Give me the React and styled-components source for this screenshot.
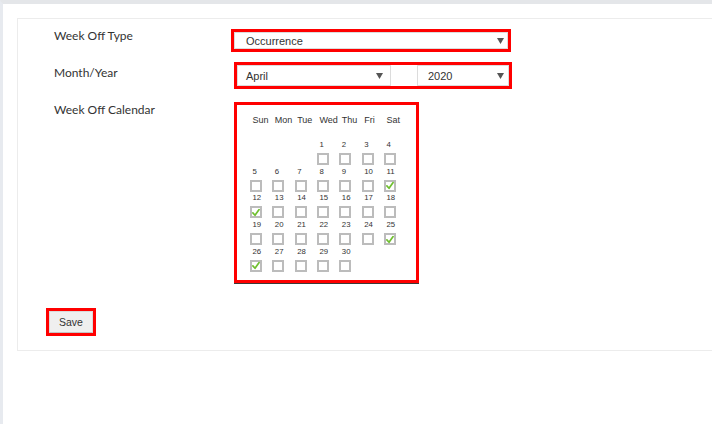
import React from "react";
import styled, { createGlobalStyle } from "styled-components";

const GlobalStyle = createGlobalStyle`
  html, body {
    margin: 0;
    padding: 0;
    background: #ffffff;
    overflow: hidden;
  }
`;

const Page = styled.div`
  box-sizing: border-box;
  height: 424px;
  border-top: 4px solid #e4e6e9;
  border-left: 3px solid #e7eaef;
  background: #fff;
  overflow: hidden;
`;

const Panel = styled.div`
  margin: 14px -40px 0 14px;
  border: 1px solid #ececec;
  padding: 10px 0 14px 36px;
  background: #fff;
`;

const Row = styled.div`
  display: flex;
  align-items: flex-start;
  margin-top: ${({ $gap }) => $gap || 0}px;
`;

const Label = styled.div`
  width: 177px;
  flex: none;
  margin-top: ${({ $offset }) => $offset || 0}px;
  font-family: Lato, "Open Sans", sans-serif;
  font-size: 12px;
  line-height: 14px;
  color: #333;
`;

const Highlight = styled.div`
  box-sizing: border-box;
  display: flex;
  margin-left: ${({ $shift }) => $shift || 0}px;
  width: ${({ $w }) => $w}px;
  height: ${({ $h }) => $h}px;
  border: 3px solid #ff0000;
  background: #fff;
  box-shadow: ${({ $shadow }) => ($shadow ? "0 1px 0 #3a3a3a" : "none")};
`;

const SelectBox = styled.div`
  box-sizing: border-box;
  display: flex;
  align-items: center;
  justify-content: space-between;
  width: ${({ $w }) => $w};
  height: 100%;
  border: 1px solid #dcdcdc;
  padding: 0 ${({ $pr }) => $pr}px 0 ${({ $pl }) => $pl}px;
  font-family: "Liberation Sans", Arial, sans-serif;
  font-size: 11px;
  color: #333;
`;

const Spacer = styled.div`
  width: ${({ $w }) => $w}px;
  flex: none;
`;

const Arrow = () => (
  <svg width="7" height="6" viewBox="0 0 7 6">
    <polygon points="0,0 7,0 3.5,6" fill="#555" />
  </svg>
);

const Select = ({ value, width, pl, pr }) => (
  <SelectBox $w={width} $pl={pl} $pr={pr}>
    <span>{value}</span>
    <Arrow />
  </SelectBox>
);

const Calendar = styled.div`
  box-sizing: border-box;
  width: 100%;
  padding: 9px 0 0 13px;
`;

const Grid = styled.div`
  display: grid;
  grid-template-columns: repeat(7, 22.33px);
  row-gap: 1.7px;
`;

const HeadCell = styled.div`
  height: 12px;
  line-height: 12px;
  padding-left: 2.5px;
  margin-bottom: 12.3px;
  font-family: "Liberation Sans", Arial, sans-serif;
  font-size: 9px;
  color: #333;
  white-space: nowrap;
`;

const DayCell = styled.div`
  display: flex;
  flex-direction: column;
  height: 25px;
`;

const DayNum = styled.div`
  height: 9px;
  line-height: 9px;
  padding-left: 2.5px;
  margin-bottom: 4px;
  font-family: "Liberation Sans", Arial, sans-serif;
  font-size: 7.8px;
  color: #333;
`;

const Check = styled.div`
  box-sizing: border-box;
  width: 12px;
  height: 12px;
  border: 2px solid #bcbcbc;
  background: #fff;
  display: flex;
  align-items: center;
  justify-content: center;
`;

const Tick = () => (
  <svg width="9" height="9" viewBox="0 0 9 9">
    <path d="M1 5 L3.4 7.6 L8 1.2" fill="none" stroke="#6fbf2f" strokeWidth="1.9" strokeLinecap="round" strokeLinejoin="round" />
  </svg>
);

const Footer = styled.div`
  margin: 25px 0 0 -8px;
`;

const SaveButton = styled.button`
  box-sizing: border-box;
  width: 100%;
  height: 100%;
  margin: 0;
  padding: 0;
  border: 1px solid #dadada;
  border-bottom-color: #c4c4c4;
  background: #efefef;
  font-family: "Liberation Sans", Arial, sans-serif;
  font-size: 10.5px;
  color: #333;
  cursor: pointer;
`;

const days = ["Sun", "Mon", "Tue", "Wed", "Thu", "Fri", "Sat"];
const checked = [11, 12, 25, 26];
const cells = [null, null, null, ...Array.from({ length: 30 }, (_, i) => i + 1)];

export default function App() {
  return (
    <>
      <GlobalStyle />
      <Page>
        <Panel>
          <Row>
            <Label>Week Off Type</Label>
            <Highlight $w={280} $h={23}>
              <Select value="Occurrence" width="100%" pl={11} pr={3} />
            </Highlight>
          </Row>
          <Row $gap={10}>
            <Label $offset={4}>Month/Year</Label>
            <Highlight $shift={3} $w={278} $h={27}>
              <Select value="April" width="154px" pl={8} pr={7} />
              <Spacer $w={26} />
              <Select value="2020" width="92px" pl={10} pr={4} />
            </Highlight>
          </Row>
          <Row $gap={13}>
            <Label $offset={1}>Week Off Calendar</Label>
            <Highlight $shift={3} $w={185} $h={181} $shadow>
              <Calendar>
                <Grid>
                  {days.map((d) => (
                    <HeadCell key={d}>{d}</HeadCell>
                  ))}
                  {cells.map((n, i) =>
                    n ? (
                      <DayCell key={i}>
                        <DayNum>{n}</DayNum>
                        <Check>{checked.includes(n) && <Tick />}</Check>
                      </DayCell>
                    ) : (
                      <DayCell key={i} />
                    )
                  )}
                </Grid>
              </Calendar>
            </Highlight>
          </Row>
          <Footer>
            <Highlight $w={50} $h={28}>
              <SaveButton>Save</SaveButton>
            </Highlight>
          </Footer>
        </Panel>
      </Page>
    </>
  );
}
